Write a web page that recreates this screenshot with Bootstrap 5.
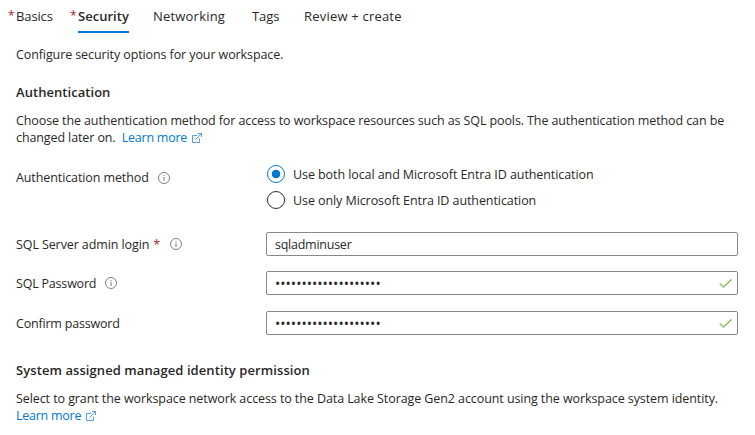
<!DOCTYPE html>
<html lang="en">
<head>
<meta charset="utf-8">
<meta name="viewport" content="width=device-width, initial-scale=1">
<title>Create workspace - Security</title>
<link rel="stylesheet" href="https://cdn.jsdelivr.net/npm/bootstrap@5.3.0/dist/css/bootstrap.min.css">
<style>
  body { font-family: "Open Sans", "Noto Sans", sans-serif; font-size: 12.5px; line-height: 17px; letter-spacing: -.1px; color: #292827; background: #fff; overflow: hidden; }
  .page { width: 755px; height: 435px; padding: 0 17px 0 16px; }
  .req { color: #a4262c; }
  .wizard-tabs { height: 33px; font-size: 13px; letter-spacing: .2px; }
  .wizard-tabs .nav-link { display: inline-block; color: #292827; padding: 8px 0 6px; border-bottom: 2px solid transparent; border-radius: 0; position: relative; white-space: nowrap; }
  .wizard-tabs .nav-link.active { font-weight: 600; border-color: #0078d4; letter-spacing: .03px; }
  .wizard-tabs .req { position: absolute; left: -8px; top: 7px; font-weight: 400; font-size: 12px; }
  .tab-basics { width: 62px; letter-spacing: -.12px; } .tab-security { width: 75px; } .tab-network { width: 99px; } .tab-tags { width: 52px; letter-spacing: -.05px; }
  .section-title { font-size: 13px; line-height: 17px; font-weight: 600; margin: 0; letter-spacing: .05px; }
  .azure-link { color: #0078d4; text-decoration: none; letter-spacing: -.25px; }
  .intro { margin-top: 13px; } .title-auth { margin-top: 21px; } .auth-copy { margin-top: 11px; letter-spacing: -.108px; }
  .field-label { width: 250px; flex: none; white-space: nowrap; }
  .method-row { margin-top: 19px; height: 52px; }
  .method-label { height: 25px; }
  .form-check.method { height: 26px; padding: 0; margin: 0; min-height: 0; }
  .method label { padding-top: 1px; letter-spacing: -.08px; }
  .method .form-check-input { width: 18px; height: 18px; margin: 0 8px 0 1px; float: none; border: 1px solid #323130; box-shadow: none; background-image: none; }
  .method .form-check-input:checked { background: radial-gradient(circle, #0078d4 3.8px, #fff 4.7px); border-color: #0078d4; }
  .login-row { margin-top: 15px; height: 24px; } .pass-row { margin-top: 15px; height: 24px; } .confirm-row { margin-top: 16px; height: 24px; }
  .azure-input { height: 24px; padding: 0 8px; border: 1px solid #8a8886; border-radius: 2px; font-size: 12.5px; line-height: 22px; letter-spacing: -.25px; color: #292827; }
  .azure-input.secret { font-size: 14px; letter-spacing: .02px; }
  .field-box { width: 472px; flex: none; }
  .valid-mark { position: absolute; right: 6px; top: 8px; }
  .info-mark { margin-left: 9px; }
  .login-row .req { margin-left: 4px; }
  .login-row .info-mark { margin-left: 10px; }
  .tight { letter-spacing: -.2px; }
  .title-system { margin-top: 27px; letter-spacing: .08px; } .system-copy { margin-top: 11px; letter-spacing: -.083px; }
  svg { display: inline-block; flex: none; }
  .ext { vertical-align: -1px; margin-left: 2px; }
</style>
<script src="https://cdn.jsdelivr.net/npm/bootstrap@5.3.0/dist/js/bootstrap.bundle.min.js"></script>
</head>
<body>
<svg class="d-none">
  <symbol id="info" viewBox="0 0 12 12"><circle cx="6" cy="6" r="5.5" fill="none" stroke="#75736f" stroke-width=".9"/><path d="M6 5v4M6 3v1" stroke="#75736f" stroke-width=".95"/></symbol>
  <symbol id="external" viewBox="0 0 10 10"><path d="M5 2.5H.5v7h7V5.5M6 .5h3.5V4M9.4.6 3.5 6.5" fill="none" stroke="#4b91e2" stroke-width=".9"/></symbol>
  <symbol id="check" viewBox="0 0 13 9"><path d="m.7 4.4 3.8 3.7L12.4.5" fill="none" stroke="#7ebd45" stroke-width="1.3"/></symbol>
</svg>
<main class="page">
  <ul class="nav wizard-tabs flex-nowrap">
    <li class="nav-item tab-basics"><a class="nav-link" href="#"><span class="req">*</span>Basics</a></li>
    <li class="nav-item tab-security"><a class="nav-link active" href="#"><span class="req">*</span>Security</a></li>
    <li class="nav-item tab-network"><a class="nav-link" href="#">Networking</a></li>
    <li class="nav-item tab-tags"><a class="nav-link" href="#">Tags</a></li>
    <li class="nav-item"><a class="nav-link" href="#">Review + create</a></li>
  </ul>
  <p class="intro mb-0">Configure security options for your workspace.</p>
  <h2 class="section-title title-auth">Authentication</h2>
  <p class="auth-copy mb-0 text-nowrap">Choose the authentication method for access to workspace resources such as SQL pools. The authentication method can be<br>changed later on.&nbsp; <a class="azure-link" href="#">Learn more <svg class="ext" width="10" height="10"><use href="#external"/></svg></a></p>
  <div class="method-row d-flex">
    <div class="field-label method-label d-flex align-items-center">Authentication method<svg class="info-mark" width="12" height="12"><use href="#info"/></svg></div>
    <div>
      <div class="form-check method d-flex align-items-start"><input class="form-check-input flex-shrink-0" type="radio" name="method" id="both" checked><label for="both">Use both local and Microsoft Entra ID authentication</label></div>
      <div class="form-check method d-flex align-items-start"><input class="form-check-input flex-shrink-0" type="radio" name="method" id="only"><label for="only">Use only Microsoft Entra ID authentication</label></div>
    </div>
  </div>
  <div class="login-row d-flex align-items-center">
    <label class="field-label d-flex align-items-center" for="login">SQL Server admin login<span class="req">*</span><svg class="info-mark" width="12" height="12"><use href="#info"/></svg></label>
    <div class="field-box"><input class="form-control azure-input" id="login" value="sqladminuser"></div>
  </div>
  <div class="pass-row d-flex align-items-center">
    <label class="field-label tight d-flex align-items-center" for="pass">SQL Password<svg class="info-mark" width="12" height="12"><use href="#info"/></svg></label>
    <div class="field-box position-relative"><input class="form-control azure-input secret" type="password" id="pass" value="aaaaaaaaaaaaaaaaaaaa"><svg class="valid-mark" width="13" height="9"><use href="#check"/></svg></div>
  </div>
  <div class="confirm-row d-flex align-items-center">
    <label class="field-label tight" for="confirm">Confirm password</label>
    <div class="field-box position-relative"><input class="form-control azure-input secret" type="password" id="confirm" value="aaaaaaaaaaaaaaaaaaaa"><svg class="valid-mark" width="13" height="9"><use href="#check"/></svg></div>
  </div>
  <h2 class="section-title title-system">System assigned managed identity permission</h2>
  <p class="system-copy mb-0 text-nowrap">Select to grant the workspace network access to the Data Lake Storage Gen2 account using the workspace system identity.<br><a class="azure-link" href="#">Learn more <svg class="ext" width="10" height="10"><use href="#external"/></svg></a></p>
</main>
</body>
</html>
